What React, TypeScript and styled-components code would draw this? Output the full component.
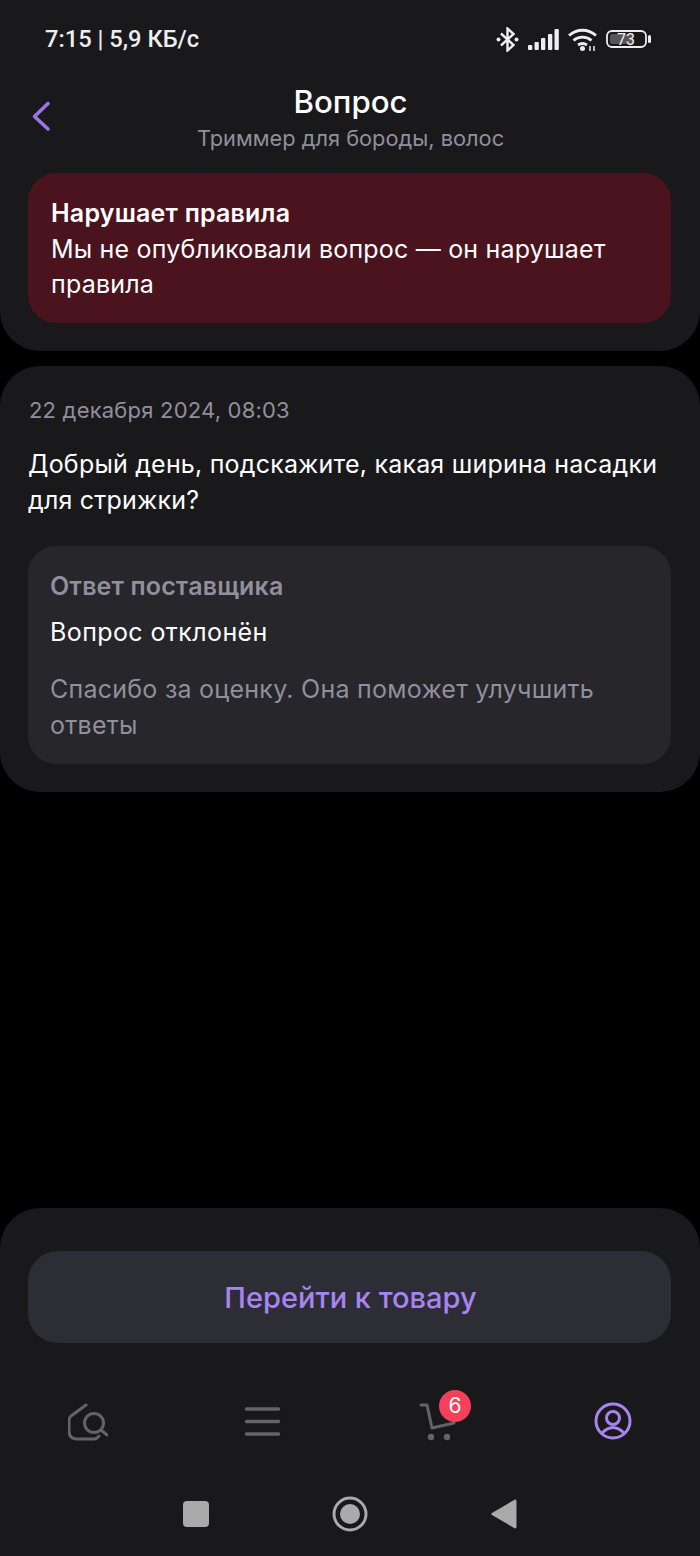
import React from 'react'
import styled, { createGlobalStyle } from 'styled-components'

const GlobalStyle = createGlobalStyle`
  html, body {
    margin: 0;
    padding: 0;
    background: #000;
  }
  * {
    box-sizing: border-box;
  }
`

const Page = styled.div`
  width: 700px;
  height: 1556px;
  display: flex;
  flex-direction: column;
  background: #000;
  font-family: Inter, 'Noto Sans', sans-serif;
  color: #fff;
`

const HeaderCard = styled.header`
  height: 351px;
  background: #19191b;
  border-radius: 0 0 40px 40px;
  padding: 0 29px 0 28px;
  display: flex;
  flex-direction: column;
`

const StatusBar = styled.div`
  height: 78px;
  margin: 0 20px 0 17px;
  display: flex;
  align-items: center;
  justify-content: space-between;
`

const StatusText = styled.span`
  font-family: Roboto, sans-serif;
  font-size: 23.7px;
  font-weight: 500;
  color: #eeeeee;
`

const StatusIcons = styled.div`
  display: flex;
  align-items: center;
  gap: 9px;
`

const TitleBar = styled.div`
  position: relative;
  height: 95px;
  padding-left: 2px;
  display: flex;
  flex-direction: column;
  align-items: center;
`

const BackIcon = styled.svg`
  position: absolute;
  left: 3px;
  top: 22px;
`

const Title = styled.h1`
  margin: 6px 0 0;
  font-size: 31.2px;
  line-height: 36px;
  font-weight: 500;
`

const Subtitle = styled.div`
  margin-top: 3px;
  font-size: 21.8px;
  line-height: 30px;
  color: #918f9c;
`

const ErrorBox = styled.div`
  height: 150px;
  padding: 23px 22px 22px 23px;
  border-radius: 28px;
  background: #4a131e;
  font-size: 25px;
  letter-spacing: 0.2px;
  line-height: 35.5px;
`

const ErrorTitle = styled.div`
  font-weight: 600;
`

const QuestionCard = styled.section`
  margin-top: 15px;
  height: 426px;
  padding: 28px 29px 0 28px;
  background: #19191b;
  border-radius: 40px;
`

const DateText = styled.div`
  padding-left: 1px;
  font-size: 22px;
  letter-spacing: 0.2px;
  line-height: 32px;
  color: #918f9c;
`

const QuestionText = styled.p`
  margin: 20px 0 0;
  font-size: 25px;
  letter-spacing: 0.2px;
  line-height: 36px;
`

const AnswerBox = styled.div`
  margin-top: 28px;
  height: 218px;
  padding: 22px 22px 0;
  border-radius: 28px;
  background: #26262b;
`

const AnswerTitle = styled.div`
  font-size: 25px;
  letter-spacing: 0.15px;
  line-height: 36px;
  font-weight: 600;
  color: #918f9c;
`

const AnswerText = styled.div`
  margin-top: 10px;
  font-size: 25px;
  letter-spacing: 0.4px;
  line-height: 36px;
`

const AnswerHint = styled.div`
  margin-top: 21px;
  font-size: 25px;
  letter-spacing: 0.25px;
  line-height: 36px;
  color: #918f9c;
`

const Spacer = styled.div`
  flex: 1;
`

const BottomCard = styled.footer`
  height: 348px;
  padding: 43px 29px 0 28px;
  background: #19191b;
  border-radius: 40px 40px 0 0;
  display: flex;
  flex-direction: column;
`

const GoButton = styled.button`
  height: 92px;
  padding: 0 0 0 2px;
  border: 0;
  border-radius: 30px;
  background: #2d2d36;
  color: #a984f0;
  font-family: inherit;
  font-size: 29px;
  font-weight: 500;
`

const TabBar = styled.nav`
  margin-top: 42px;
  height: 72px;
  padding: 0 38px 0 40px;
  display: flex;
  align-items: center;
  justify-content: space-between;
`

const TabIcon = styled.div`
  position: relative;
  width: 40px;
  height: 40px;
`

const Badge = styled.span`
  position: absolute;
  left: 21px;
  top: -11px;
  width: 32px;
  height: 32px;
  border-radius: 50%;
  background: #f5405c;
  color: #fff;
  font-size: 21px;
  line-height: 32px;
  text-align: center;
`

const NavBar = styled.div`
  margin-top: 39px;
  padding-left: 155px;
  display: flex;
  align-items: center;
  gap: 123px;
`

const Gray = '#63636b'

export default function App() {
  return (
    <Page>
      <GlobalStyle />
      <HeaderCard>
        <StatusBar>
          <StatusText>7:15 | 5,9 КБ/с</StatusText>
          <StatusIcons>
            <svg width="23" height="25" viewBox="0 0 23 25" fill="none" stroke="#eee" strokeWidth="2.4">
              <path d="M5 6.500l12.500 11.500-6 5.500V1.500l6 5.500L5 18.500" />
              <circle cx="2.500" cy="12.500" r="2" fill="#eee" stroke="none" />
              <circle cx="20.500" cy="12.500" r="2" fill="#eee" stroke="none" />
            </svg>
            <svg width="31" height="21" viewBox="0 0 31 21" fill="#eee">
              <rect x="0" y="16" width="4.300" height="5" rx="1" />
              <rect x="6.500" y="13" width="4.300" height="8" rx="1" />
              <rect x="13" y="9" width="4.300" height="12" rx="1" />
              <rect x="20" y="5" width="4.300" height="16" rx="1" />
              <rect x="26.500" y="0" width="4.300" height="21" rx="1" />
            </svg>
            <svg width="29" height="23" viewBox="0 0 29 23" fill="none" stroke="#eee" strokeWidth="2.800">
              <path d="M1 7.500c8-7 19-7 27 0" />
              <path d="M5.500 12.500c5-4.500 13-4.500 18 0" />
              <path d="M10 17c3-2 6-2 9 0" />
              <circle cx="14.500" cy="20.500" r="2.500" fill="#eee" stroke="none" />
              <path d="M22 23v-5M26 18v5" strokeWidth="1.500" />
            </svg>
            <svg width="45" height="18" viewBox="0 0 45 18">
              <rect x="1" y="1" width="39" height="16" rx="5" fill="none" stroke="#eee" strokeWidth="1.800" />
              <rect x="4" y="4" width="23" height="10" rx="2" fill="#55555a" />
              <rect x="42" y="5" width="3" height="8" rx="1.500" fill="#eee" />
              <text x="20" y="15" fontSize="16" fill="#eee" textAnchor="middle" fontFamily="Roboto, sans-serif">73</text>
            </svg>
          </StatusIcons>
        </StatusBar>
        <TitleBar>
          <BackIcon width="20" height="32" viewBox="0 0 20 32" fill="none" stroke="#9a75ea" strokeWidth="3.600" strokeLinecap="round" strokeLinejoin="round">
            <path d="M17 3.500L3.500 16.500 17 29" />
          </BackIcon>
          <Title>Вопрос</Title>
          <Subtitle>Триммер для бороды, волос</Subtitle>
        </TitleBar>
        <ErrorBox>
          <ErrorTitle>Нарушает правила</ErrorTitle>
          Мы не опубликовали вопрос — он нарушает правила
        </ErrorBox>
      </HeaderCard>
      <QuestionCard>
        <DateText>22 декабря 2024, 08:03</DateText>
        <QuestionText>Добрый день, подскажите, какая ширина насадки для стрижки?</QuestionText>
        <AnswerBox>
          <AnswerTitle>Ответ поставщика</AnswerTitle>
          <AnswerText>Вопрос отклонён</AnswerText>
          <AnswerHint>Спасибо за оценку. Она поможет улучшить ответы</AnswerHint>
        </AnswerBox>
      </QuestionCard>
      <Spacer />
      <BottomCard>
        <GoButton>Перейти к товару</GoButton>
        <TabBar>
          <TabIcon>
            <svg width="40" height="40" viewBox="0 0 40 40" fill="none" stroke={Gray} strokeWidth="3" strokeLinecap="round" strokeLinejoin="round">
              <path d="M18 4L3 15q-2 2-2 5v10q0 8 8 8h17q3 0 5-3" />
              <circle cx="26" cy="22" r="9.500" />
              <path d="M33 29l6 5" />
            </svg>
          </TabIcon>
          <TabIcon>
            <svg width="40" height="40" viewBox="0 0 40 40" fill="none" stroke={Gray} strokeWidth="3.500" strokeLinecap="round">
              <path d="M3.500 8h32M3.500 20.500h32M3.500 33h32" />
            </svg>
          </TabIcon>
          <TabIcon>
            <svg width="40" height="40" viewBox="0 0 40 40" fill="none" stroke={Gray} strokeWidth="3" strokeLinecap="round" strokeLinejoin="round">
              <path d="M3 4h6l5 23 22-5" />
              <circle cx="13" cy="36" r="3.200" fill={Gray} stroke="none" />
              <circle cx="29" cy="36" r="3.200" fill={Gray} stroke="none" />
            </svg>
            <Badge>6</Badge>
          </TabIcon>
          <TabIcon>
            <svg width="40" height="40" viewBox="0 0 40 40" fill="none" stroke="#a984f0" strokeWidth="3">
              <circle cx="20" cy="20" r="17" />
              <circle cx="20" cy="17" r="6.500" />
              <path d="M8 33q12-13 24 0" />
            </svg>
          </TabIcon>
        </TabBar>
        <NavBar>
          <svg width="26" height="26" viewBox="0 0 26 26" fill="#aaaaaa">
            <rect width="26" height="26" rx="4" />
          </svg>
          <svg width="36" height="36" viewBox="0 0 36 36" fill="#aaaaaa">
            <circle cx="18" cy="18" r="16" fill="none" stroke="#aaaaaa" strokeWidth="3" />
            <circle cx="18" cy="18" r="10" />
          </svg>
          <svg width="26" height="30" viewBox="0 0 26 30" fill="#aaaaaa">
            <path d="M24 0.500c1 0 1.500 1 1.500 2v25c0 1-.5 2-1.500 2L1 16c-1-.5-1-1.500 0-2z" />
          </svg>
        </NavBar>
      </BottomCard>
    </Page>
  )
}
